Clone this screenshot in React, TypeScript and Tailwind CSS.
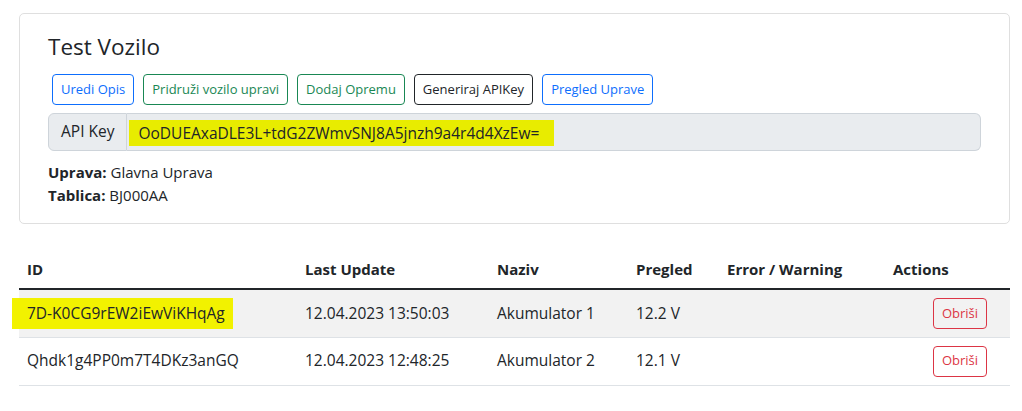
import React from "react";

const font = { fontFamily: '"Open Sans", "Noto Sans", sans-serif' };

function Btn({ children, tone }: { children: React.ReactNode; tone: "blue" | "green" | "dark" }) {
  const cls =
    tone === "blue"
      ? "border-[#0d6efd] text-[#0d6efd]"
      : tone === "green"
      ? "border-[#198754] text-[#198754]"
      : "border-[#212529] text-[#212529]";
  return (
    <button className={`h-[31px] px-[8px] border rounded-[4px] text-[13px] leading-[21px] bg-white ${cls}`}>
      {children}
    </button>
  );
}

function DelBtn() {
  return (
    <div className="flex justify-end pr-[15px]">
      <button className="h-[31px] w-[54px] border border-[#dc3545] text-[#dc3545] rounded-[4px] text-[13px] bg-transparent">
        Obriši
      </button>
    </div>
  );
}

export default function App() {
  return (
    <div className="bg-white w-[1022px] h-[411px] text-[#212529]" style={font}>
      <div className="pt-[13px] pl-[19px] w-[1010px]">
        <div className="border border-[#dfdfdf] rounded-[5px] pt-[18px] pb-[16px] px-[28px]">
          <h4 className="text-[22.5px] leading-[29px] font-normal">Test Vozilo</h4>
          <div className="flex gap-[9px] mt-[13px] ml-[4px]">
            <Btn tone="blue">Uredi Opis</Btn>
            <Btn tone="green">Pridruži vozilo upravi</Btn>
            <Btn tone="green">Dodaj Opremu</Btn>
            <Btn tone="dark">Generiraj APIKey</Btn>
            <Btn tone="blue">Pregled Uprave</Btn>
          </div>
          <div className="flex mt-[8px] h-[38px]">
            <div className="flex items-center px-[12px] bg-[#e9ecef] border border-[#ced4da] rounded-l-[6px] text-[15.5px]">
              API Key
            </div>
            <div className="flex-1 flex items-center pl-[2px] bg-[#e9ecef] border border-l-0 border-[#ced4da] rounded-r-[6px] text-[15.5px]">
              <span className="inline-block h-[26px] leading-[26px] pl-[9px] pr-[15px] bg-[#e8ec00] mt-[2px]">
                OoDUEAxaDLE3L+tdG2ZWmvSNJ8A5jnzh9a4r4d4XzEw=
              </span>
            </div>
          </div>
          <div className="mt-[10px] text-[15px] leading-[23px]">
            <div>
              <b>Uprava:</b> Glavna Uprava
            </div>
            <div>
              <b>Tablica:</b> BJ000AA
            </div>
          </div>
        </div>

        <table className="mt-[26px] w-[991px] border-collapse text-[15.5px] table-fixed">
          <colgroup>
            <col className="w-[278px]" />
            <col className="w-[192px]" />
            <col className="w-[139px]" />
            <col className="w-[91px]" />
            <col className="w-[166px]" />
            <col />
          </colgroup>
          <thead>
            <tr className="border-b-[2px] border-[#212529] text-[15px]">
              <th className="text-left font-bold px-[8px] h-[39px] leading-[24px]">ID</th>
              <th className="text-left font-bold px-[8px]">Last Update</th>
              <th className="text-left font-bold px-[8px]">Naziv</th>
              <th className="text-left font-bold px-[8px]">Pregled</th>
              <th className="text-left font-bold px-[8px]">Error / Warning</th>
              <th className="text-left font-bold px-[8px]">Actions</th>
            </tr>
          </thead>
          <tbody>
            <tr className="bg-[#f2f2f2] border-b border-[#dee2e6]">
              <td className="px-[8px] h-[48px]">
                <span className="inline-block -ml-[15px] pl-[15px] pr-[8px] h-[31px] leading-[31px] bg-[#f2f200]">
                  7D-K0CG9rEW2iEwViKHqAg
                </span>
              </td>
              <td className="px-[8px]">12.04.2023 13:50:03</td>
              <td className="px-[8px]">Akumulator 1</td>
              <td className="px-[8px]">12.2 V</td>
              <td className="px-[8px]"></td>
              <td className="px-[8px]">
                <DelBtn />
              </td>
            </tr>
            <tr className="border-b border-[#dee2e6]">
              <td className="px-[8px] h-[48px]">Qhdk1g4PP0m7T4DKz3anGQ</td>
              <td className="px-[8px]">12.04.2023 12:48:25</td>
              <td className="px-[8px]">Akumulator 2</td>
              <td className="px-[8px]">12.1 V</td>
              <td className="px-[8px]"></td>
              <td className="px-[8px]">
                <DelBtn />
              </td>
            </tr>
          </tbody>
        </table>
      </div>
    </div>
  );
}
